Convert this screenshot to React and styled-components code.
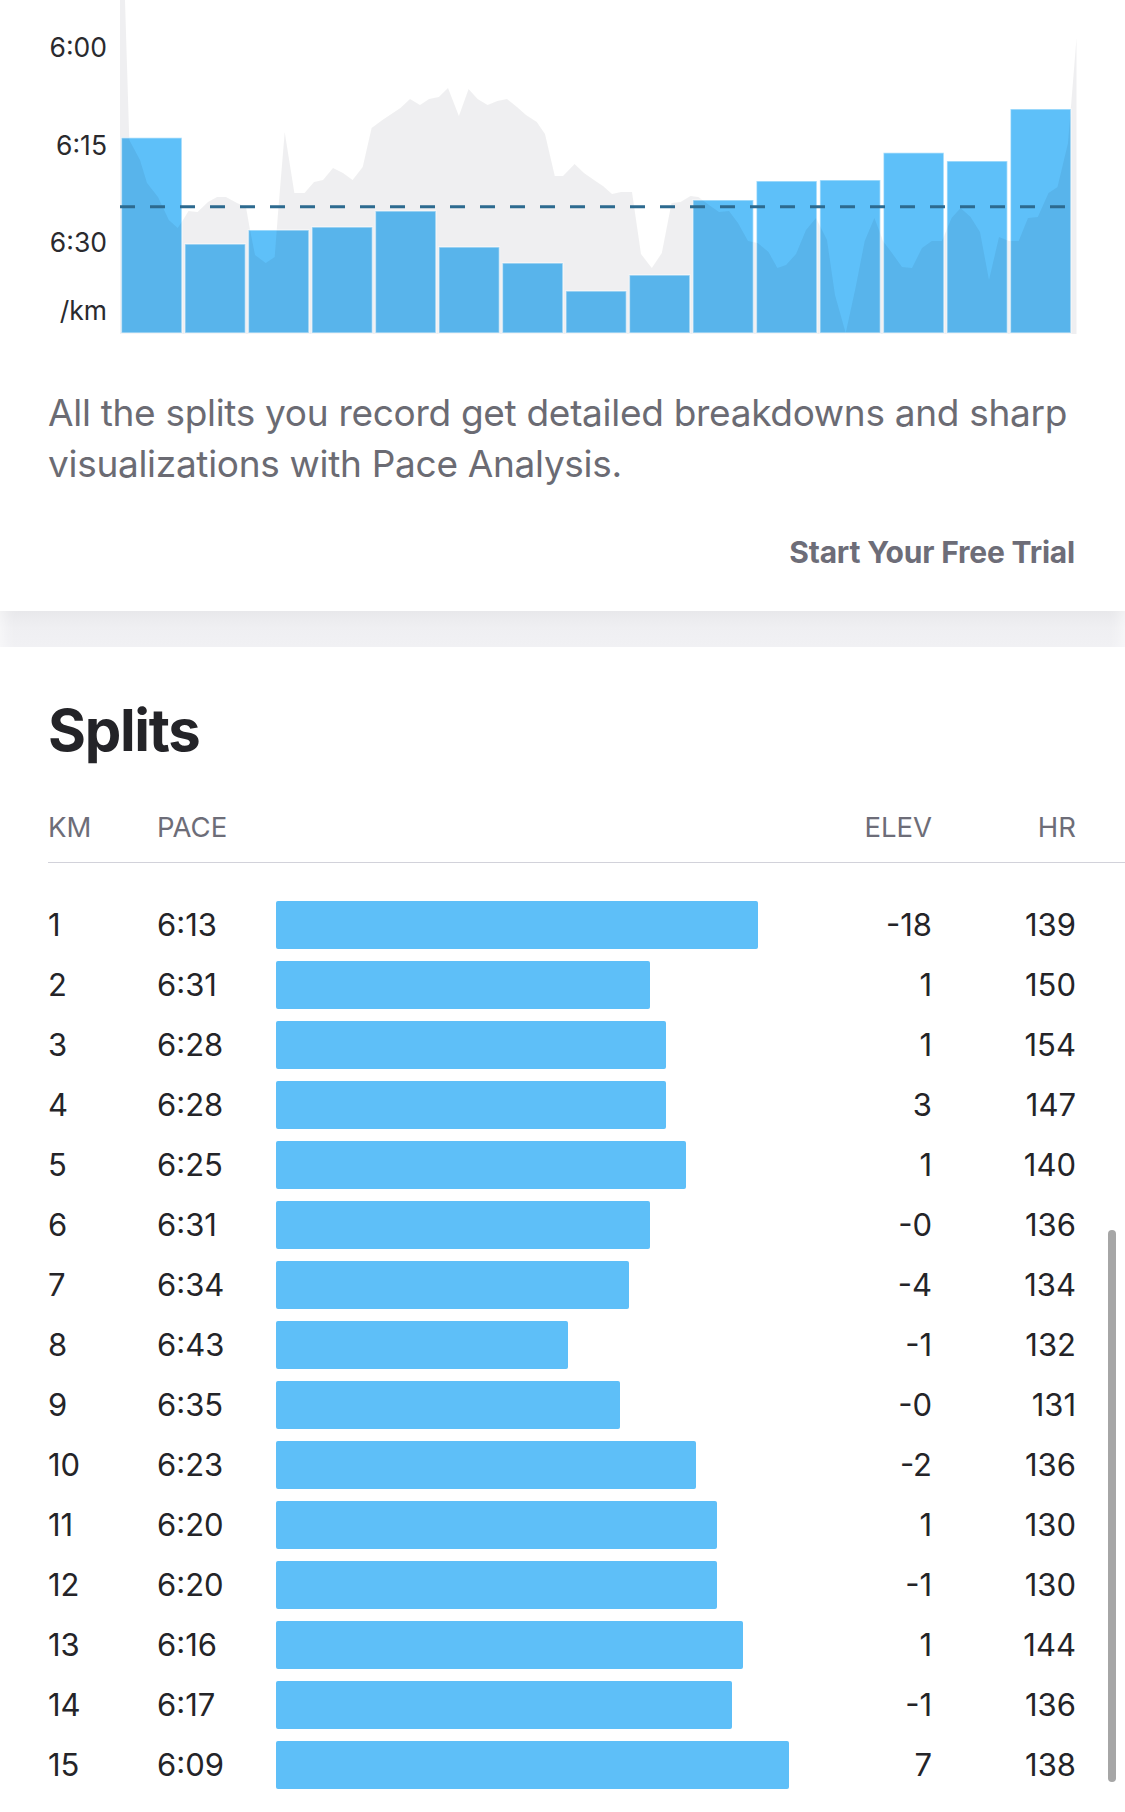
import React from "react";
import styled, { createGlobalStyle } from "styled-components";

const GlobalStyle = createGlobalStyle`
  html, body { margin: 0; padding: 0; background: #ffffff; }
  body { font-family: Inter, "Noto Sans", "Liberation Sans", sans-serif; -webkit-font-smoothing: antialiased; }
`;

const Page = styled.div`
  position: relative;
  width: 1125px;
  height: 1812px;
  overflow: hidden;
  background: #ffffff;
`;

const ChartRow = styled.div`
  display: flex;
  align-items: flex-start;
  height: 335px;
`;

const Axis = styled.div`
  width: 107px;
  display: flex;
  flex-direction: column;
  align-items: flex-end;
  padding-top: 33px;
`;

const AxisLabel = styled.div`
  font-size: 26.5px;
  line-height: 28px;
  color: #2a2a2e;
  margin-top: ${(p) => p.$gap || 0}px;
`;

const ChartSvg = styled.svg`
  display: block;
  margin-left: 13px;
  flex: none;
`;

const Description = styled.p`
  margin: 52px 20px 0 48px;
  font-size: 37px;
  line-height: 51px;
  color: #6b6b73;
  letter-spacing: -0.3px;
`;

const CtaRow = styled.div`
  display: flex;
  justify-content: flex-end;
  margin-top: 43px;
  padding: 0 50px 39px 0;
`;

const Cta = styled.a`
  font-size: 30px;
  line-height: 40px;
  font-weight: 700;
  color: #6d6d78;
  letter-spacing: -0.2px;
  text-decoration: none;
  cursor: pointer;
`;

const Band = styled.div`
  height: 36px;
  background: linear-gradient(#e8e8eb, #efeff2 45%, #f1f1f4);
  box-shadow: inset 14px 0 14px -10px rgba(255, 255, 255, 0.6),
    inset -14px 0 14px -10px rgba(255, 255, 255, 0.6);
`;

const SplitsSection = styled.section`
  padding: 54px 0 0 48px;
`;

const Heading = styled.h2`
  margin: 0;
  font-size: 58px;
  line-height: 58px;
  font-weight: 700;
  letter-spacing: -1.3px;
  color: #242428;
`;

const columns = "109px 119px 1fr 132px 144px";

const HeaderGrid = styled.div`
  display: grid;
  grid-template-columns: ${columns};
  margin-top: 48px;
  padding: 0 49px 15px 0;
  border-bottom: 1.5px solid #d2d2da;
  font-size: 27.5px;
  line-height: 40px;
  color: #6d6d78;
`;

const HeadCell = styled.div`
  text-align: ${(p) => (p.$right ? "right" : "left")};
`;

const Rows = styled.div`
  padding: 31.5px 49px 0 0;
`;

const Row = styled.div`
  display: grid;
  grid-template-columns: ${columns};
  align-items: center;
  height: 60px;
  font-size: 31px;
  color: #242428;
`;

const Cell = styled.div`
  text-align: ${(p) => (p.$right ? "right" : "left")};
  line-height: 40px;
`;

const PaceBar = styled.div`
  height: 48px;
  border-radius: 2px;
  background: #5ebff8;
`;

const ScrollThumb = styled.div`
  position: absolute;
  right: 9px;
  top: 1230px;
  width: 8px;
  height: 552px;
  border-radius: 4px;
  background: #a6a6a6;
`;

const splits = [
  [1, "6:13", 481.5, "-18", 139],
  [2, "6:31", 373.7, "1", 150],
  [3, "6:28", 390, "1", 154],
  [4, "6:28", 390, "3", 147],
  [5, "6:25", 409.5, "1", 140],
  [6, "6:31", 373.7, "-0", 136],
  [7, "6:34", 353, "-4", 134],
  [8, "6:43", 291.8, "-1", 132],
  [9, "6:35", 343.7, "-0", 131],
  [10, "6:23", 420, "-2", 136],
  [11, "6:20", 440.6, "1", 130],
  [12, "6:20", 440.6, "-1", 130],
  [13, "6:16", 466.5, "1", 144],
  [14, "6:17", 456.4, "-1", 136],
  [15, "6:09", 513, "7", 138],
];

const barTops = [137.7, 244, 230, 227, 211, 247, 263, 291, 275, 200, 181, 180, 152.7, 161, 109];

const elevation = [
  [0, 0], [5, 0], [9.3, 140], [20, 160], [27, 183], [38, 197], [48.8, 220], [57.7, 228], [63, 220],
  [68.5, 211], [77.5, 212], [88, 202], [97, 197], [106, 197], [117, 203], [126, 207], [129.5, 227],
  [135, 255], [145.7, 263], [154.7, 257], [158, 213], [164.7, 132], [174.4, 193], [184.5, 193],
  [194, 182], [203, 180], [213, 168], [223, 173], [232.6, 180], [242.7, 167], [251.6, 128],
  [262.4, 120], [271.4, 114], [280.4, 108], [290, 99], [300, 105], [309, 99], [318.8, 97], [328, 88],
  [338.9, 116], [348.6, 89], [357.6, 99], [367.6, 105], [377.3, 101], [387, 99], [397, 107],
  [406, 115], [416.8, 122], [425, 134], [434.8, 176], [443, 176], [454.6, 164], [464, 173],
  [474, 180], [483, 186], [492, 194], [501, 192], [512, 192], [521, 254], [531.8, 268],
  [541.8, 253], [551.5, 203], [560.5, 202], [570.5, 196], [578.4, 197], [589, 205], [599, 212],
  [609, 211], [618, 223], [628, 241], [637.7, 243], [648.5, 252], [657.4, 268], [666, 265],
  [676, 254], [686, 230], [696, 218], [707, 240], [715, 295], [725.7, 333], [735.7, 287],
  [744.7, 241], [754.4, 218], [763, 241], [772, 253], [782, 267], [792, 268], [802, 248],
  [811.8, 241], [821.9, 241], [831.6, 218], [840.6, 208], [850.6, 217], [860, 232], [869, 280],
  [879, 237], [889, 241], [898.7, 241], [908, 218], [917.8, 217], [928.5, 193], [937.5, 187],
  [948, 143], [956.5, 38], [956.5, 334], [0, 334],
];

const elevationPath = "M" + elevation.map(([x, y]) => `${x} ${y}`).join(" L") + " Z";

function PaceChart() {
  const bottom = 333;
  const pitch = 63.5;
  const w = 60.5;
  return (
    <ChartSvg width="957" height="335" viewBox="0 0 957 335">
      {barTops.map((t, i) => (
        <rect key={"b" + i} x={1.4 + i * pitch} y={t} width={w} height={bottom - t} fill="#5ec0f9" />
      ))}
      <path d={elevationPath} fill="rgba(0,0,32,0.063)" />
      {barTops.map((t, i) => (
        <rect
          key={"o" + i}
          x={1.4 + i * pitch}
          y={t}
          width={w}
          height={bottom - t}
          fill="none"
          stroke="rgba(255,255,255,0.5)"
          strokeWidth="1.5"
        />
      ))}
      <line x1="0" y1="206.7" x2="945" y2="206.7" stroke="#2d6a8f" strokeWidth="3" strokeDasharray="15 15" />
    </ChartSvg>
  );
}

export default function App() {
  return (
    <>
      <GlobalStyle />
      <Page>
        <ChartRow>
          <Axis>
            <AxisLabel>6:00</AxisLabel>
            <AxisLabel $gap={70}>6:15</AxisLabel>
            <AxisLabel $gap={69}>6:30</AxisLabel>
            <AxisLabel $gap={40}>/km</AxisLabel>
          </Axis>
          <PaceChart />
        </ChartRow>
        <Description>
          All the splits you record get detailed breakdowns and sharp visualizations with Pace Analysis.
        </Description>
        <CtaRow>
          <Cta>Start Your Free Trial</Cta>
        </CtaRow>
        <Band />
        <SplitsSection>
          <Heading>Splits</Heading>
          <HeaderGrid>
            <HeadCell>KM</HeadCell>
            <HeadCell>PACE</HeadCell>
            <HeadCell />
            <HeadCell $right>ELEV</HeadCell>
            <HeadCell $right>HR</HeadCell>
          </HeaderGrid>
          <Rows>
            {splits.map(([km, pace, width, elev, hr]) => (
              <Row key={km}>
                <Cell>{km}</Cell>
                <Cell>{pace}</Cell>
                <PaceBar style={{ width: `${width}px` }} />
                <Cell $right>{elev}</Cell>
                <Cell $right>{hr}</Cell>
              </Row>
            ))}
          </Rows>
        </SplitsSection>
        <ScrollThumb />
      </Page>
    </>
  );
}
